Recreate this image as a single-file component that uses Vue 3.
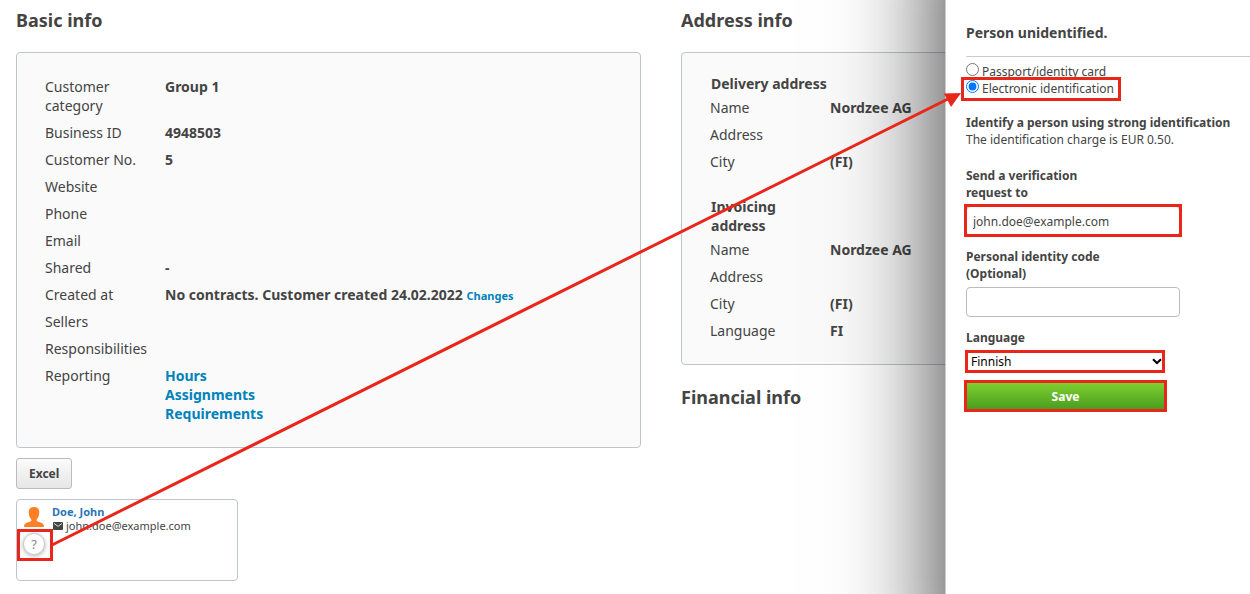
<script setup>
import { ref } from 'vue'

const basicRows = [
  { label: 'Customer category', value: 'Group 1' },
  { label: 'Business ID', value: '4948503' },
  { label: 'Customer No.', value: '5' },
  { label: 'Website' },
  { label: 'Phone' },
  { label: 'Email' },
  { label: 'Shared', value: '-' },
  { label: 'Created at', value: 'No contracts. Customer created 24.02.2022', action: 'Changes' },
  { label: 'Sellers' },
  { label: 'Responsibilities' },
  { label: 'Reporting', links: ['Hours', 'Assignments', 'Requirements'] },
]

const addresses = [
  {
    title: 'Delivery address',
    rows: [
      { label: 'Name', value: 'Nordzee AG' },
      { label: 'Address' },
      { label: 'City', value: '(FI)' },
    ],
  },
  {
    title: 'Invoicing address',
    rows: [
      { label: 'Name', value: 'Nordzee AG' },
      { label: 'Address' },
      { label: 'City', value: '(FI)' },
      { label: 'Language', value: 'FI' },
    ],
  },
]

const method = ref('electronic')
const email = ref('john.doe@example.com')
const identityCode = ref('')
const language = ref('Finnish')
</script>

<template>
  <div class="page">
    <main class="columns">
      <section>
        <h2>Basic info</h2>
        <div class="card">
          <dl>
            <div v-for="row in basicRows" :key="row.label" class="row">
              <dt>{{ row.label }}</dt>
              <dd>
                {{ row.value }}
                <a v-if="row.action" class="small-link" href="#">{{ row.action }}</a>
                <a v-for="link in row.links" :key="link" class="report-link" href="#">{{ link }}</a>
              </dd>
            </div>
          </dl>
        </div>
        <button type="button" class="excel">Excel</button>
        <div class="contact">
          <div class="contact-icons">
            <svg class="person" viewBox="0 0 20 20" width="20" height="20" aria-hidden="true">
              <path fill="#ff7f27" d="M10 0C6.500 0 4.700 2 4.700 5.200c0 3 1 5.600 2.600 7.200v1.400c-.5 1-2 1.200-3.500 1.700C1.200 16.300 0 17 0 20h20c0-3-1.200-3.700-3.800-4.500-1.500-.5-3-.7-3.500-1.700v-1.400c1.600-1.600 2.600-4.200 2.600-7.200C15.300 2 13.500 0 10 0z" />
            </svg>
            <div class="marked help-mark">
              <button type="button" class="help">?</button>
            </div>
          </div>
          <div class="contact-text">
            <a href="#">Doe, John</a>
            <div class="contact-mail">
              <svg viewBox="0 0 10 8" width="10" height="8" aria-hidden="true">
                <rect width="10" height="8" rx="1" fill="#444" />
                <path d="M1 1.500 5 4.300 9 1.500" fill="none" stroke="#fff" stroke-width="0.800" />
              </svg>
              <span>john.doe@example.com</span>
            </div>
          </div>
        </div>
      </section>

      <section>
        <h2>Address info</h2>
        <div class="card address-card">
          <div v-for="block in addresses" :key="block.title" class="address">
            <h3>{{ block.title }}</h3>
            <dl>
              <div v-for="row in block.rows" :key="row.label" class="row">
                <dt>{{ row.label }}</dt>
                <dd>{{ row.value }}</dd>
              </div>
            </dl>
          </div>
        </div>
        <h2 class="financial">Financial info</h2>
      </section>
    </main>

    <aside class="drawer">
      <h4>Person unidentified.</h4>
      <form @submit.prevent>
        <div class="options">
          <label class="option">
            <input v-model="method" type="radio" name="method" value="passport" />
            <span>Passport/identity card</span>
          </label>
          <label class="option marked option-mark">
            <input v-model="method" type="radio" name="method" value="electronic" />
            <span>Electronic identification</span>
          </label>
        </div>
        <p class="charge">
          <strong>Identify a person using strong identification</strong><br />
          The identification charge is EUR 0.50.
        </p>
        <div class="field">
          <label for="email">Send a verification request to</label>
          <div class="marked input-mark">
            <input id="email" v-model="email" type="text" />
          </div>
        </div>
        <div class="field code">
          <label for="code">Personal identity code (Optional)</label>
          <input id="code" v-model="identityCode" type="text" />
        </div>
        <div class="field code">
          <label for="language">Language</label>
          <div class="marked select-mark">
            <select id="language" v-model="language">
              <option>Finnish</option>
            </select>
            <svg class="chevron" viewBox="0 0 10 7" width="10" height="7" aria-hidden="true">
              <path d="M1 1.200 5 5 9 1.200" fill="none" stroke="#000" stroke-width="2" />
            </svg>
          </div>
        </div>
        <div class="marked save-mark">
          <button type="submit" class="save">Save</button>
        </div>
      </form>
    </aside>

    <svg class="arrow" viewBox="0 0 1250 594" width="1250" height="594" aria-hidden="true">
      <path d="M52 545 948 99" stroke="#e8271a" stroke-width="3" fill="none" />
      <path d="M961 93 944 93.500 951 107z" fill="#e8271a" />
    </svg>
  </div>
</template>

<style>
body {
  margin: 0;
  background: #fff;
}
</style>

<style scoped>
.page {
  position: relative;
  min-height: 100vh;
  overflow: hidden;
  color: #444;
  font-family: "Noto Sans", sans-serif;
  font-size: 14px;
  line-height: 19px;
}
* {
  box-sizing: border-box;
}
h2, h3, h4, dl, dd, p {
  margin: 0;
}
a {
  color: #0082ba;
  font-weight: 700;
  text-decoration: none;
}
button, input, select {
  font-family: inherit;
  margin: 0;
}
.columns {
  display: grid;
  grid-template-columns: 50vw 1fr;
  gap: 40px;
  padding-left: 16px;
}
h2 {
  font-size: 18px;
  line-height: 24px;
  padding-top: 8px;
  margin-bottom: 20px;
}
.card {
  border: 1px solid #bfc5cc;
  border-radius: 4px;
  background: #fafafa;
  padding: 24px 28px;
}
.row {
  display: grid;
  grid-template-columns: 120px 1fr;
}
.row + .row {
  margin-top: 8px;
}
dd {
  font-weight: 700;
}
.small-link {
  font-size: 11px;
  line-height: 11px;
}
.report-link {
  display: block;
}
.excel {
  display: block;
  height: 31px;
  margin: 10px 0;
  padding: 0 12px;
  border: 1px solid #bbb;
  border-radius: 3px;
  background: linear-gradient(#fbfbfb, #e6e6e6);
  color: #444;
  font-size: 12px;
  font-weight: 700;
}
.contact {
  display: flex;
  gap: 8px;
  width: 222px;
  height: 82px;
  padding: 4px 7px;
  border: 1px solid #bfc5cc;
  border-radius: 4px;
  font-size: 11px;
  line-height: 14px;
}
.contact-icons {
  width: 20px;
  padding-top: 3px;
}
.person {
  display: block;
}
.contact-text a {
  color: #2a75b8;
}
.contact-text {
  padding-top: 1px;
}
.contact-mail {
  display: flex;
  align-items: center;
  gap: 3px;
}
.contact-mail svg {
  margin-left: 1px;
}
.help {
  display: block;
  width: 22px;
  height: 22px;
  padding: 0;
  border: 1px solid #ccc;
  border-radius: 50%;
  background: #fff;
  box-shadow: 0 1px 4px rgba(0, 0, 0, 0.3);
  color: #888;
  font-size: 13px;
  line-height: 20px;
}
.address-card {
  padding-top: 21px;
}
.address + .address {
  margin-top: 26px;
}
h3 {
  width: 121px;
  margin-bottom: 5px;
  padding-left: 1px;
  font-size: 14px;
}
.financial {
  padding-top: 20px;
}
.drawer {
  position: absolute;
  z-index: 1;
  top: 0;
  right: 0;
  bottom: 0;
  width: 305px;
  padding: 23px 0 0 20px;
  font-size: 12px;
  line-height: 17px;
}
.drawer::before {
  content: "";
  position: absolute;
  z-index: -1;
  inset: -100px 0;
  border-left: 1px solid #ccc;
  background: #fff;
  box-shadow: 0 0 100px rgba(0, 0, 0, 0.8);
}
h4 {
  margin-left: 1px;
  padding-bottom: 13px;
  border-bottom: 1px solid #ccc;
  font-size: 14px;
  line-height: 20px;
}
form {
  padding-left: 1px;
}
.options {
  padding-top: 6px;
}
.option {
  display: flex;
  gap: 3px;
  width: 150px;
}
.option input {
  flex: none;
  width: 13px;
  height: 13px;
}
.charge {
  margin-top: 17px;
}
.field {
  margin-top: 19px;
}
.field label {
  display: block;
  width: 150px;
  font-weight: 700;
}
.field input {
  display: block;
  width: 214px;
  height: 30px;
  padding: 0 6px;
  border: 1px solid #bbb;
  border-radius: 4px;
  color: #444;
  font-size: 12px;
}
.field.code {
  margin-top: 12px;
}
.field > input,
.input-mark {
  margin-top: 5px;
}
.input-mark {
  width: 214px;
}
select {
  display: block;
  width: 199px;
  height: 20px;
  padding: 0 4px;
  border: 1px solid #666;
  background: #fff;
  color: #000;
  font-size: 12px;
  appearance: none;
}
.select-mark {
  width: 199px;
  margin-top: 5px;
}
.chevron {
  position: absolute;
  right: 3px;
  top: 7px;
}
.save-mark {
  width: 199px;
  margin-top: 11px;
}
.save {
  display: block;
  width: 100%;
  height: 30px;
  padding: 0;
  border: 0;
  border-bottom: 1px solid #3a8a20;
  border-radius: 3px;
  background: linear-gradient(#7fd22f, #47991f);
  color: #fff;
  font-size: 12px;
  font-weight: 700;
}
.marked {
  position: relative;
}
.marked::after {
  content: "";
  position: absolute;
  inset: -2px;
  border: 3px solid #e8271a;
  pointer-events: none;
}
.input-mark::after {
  inset: -2px -2px -1px;
}
.select-mark::after {
  inset: -1px 0 -2px -1px;
}
.save-mark::after {
  inset: -2px -2px 0;
}
.help-mark {
  width: 22px;
  height: 22px;
  margin-top: 6px;
}
.help-mark .help {
  margin-left: -1px;
}
.help-mark::after {
  inset: -4px -7px -6px -7px;
}
.option-mark::after {
  inset: -3px -5px -4px -5px;
}
.arrow {
  position: absolute;
  z-index: 2;
  top: 0;
  left: 0;
  pointer-events: none;
}
</style>
